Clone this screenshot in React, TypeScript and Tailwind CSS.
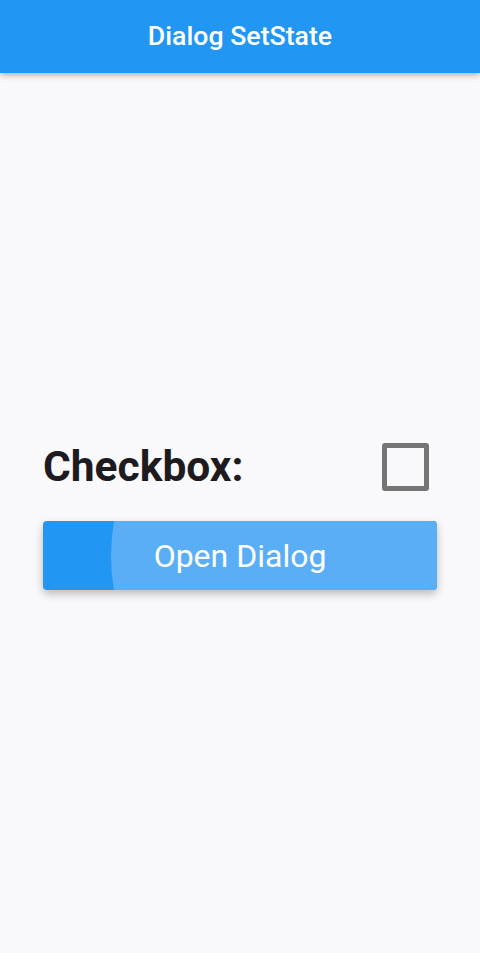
import * as React from "react"

export default function App() {
  const [checked, setChecked] = React.useState(false)

  return (
    <div className="min-h-[953px] w-full bg-[#f9f8fb] flex flex-col" style={{ fontFamily: "Roboto, 'Noto Sans', sans-serif" }}>
      {/* App bar */}
      <header className="h-[73px] bg-[#2196f3] flex items-center justify-center shadow-[0_2px_6px_rgba(0,0,0,0.3)] relative z-10">
        <h1 className="text-white text-[26.7px] font-medium leading-none">Dialog SetState</h1>
      </header>

      {/* Body */}
      <main className="flex-1 px-[43px] pt-[370px]">
        <div className="flex items-center justify-between h-[48px]">
          <span className="text-[42.5px] font-bold text-[#1d1b20] leading-none">Checkbox:</span>
          <button
            type="button"
            onClick={() => setChecked(!checked)}
            className="mr-[8px] w-[47px] h-[48px] rounded-[3px] border-[5px] border-[#757575] bg-transparent"
          />
        </div>

        <button
          type="button"
          className="relative mt-[30px] w-full h-[69px] rounded-[4px] bg-[#2196f3] overflow-hidden shadow-[0_4px_8px_rgba(0,0,0,0.25)] flex items-center justify-center"
        >
          <span className="absolute left-[68px] top-[-165px] w-[400px] h-[400px] rounded-full bg-[#5aaef5]" />
          <span className="relative text-white text-[32px] leading-none">Open Dialog</span>
        </button>
      </main>
    </div>
  )
}
